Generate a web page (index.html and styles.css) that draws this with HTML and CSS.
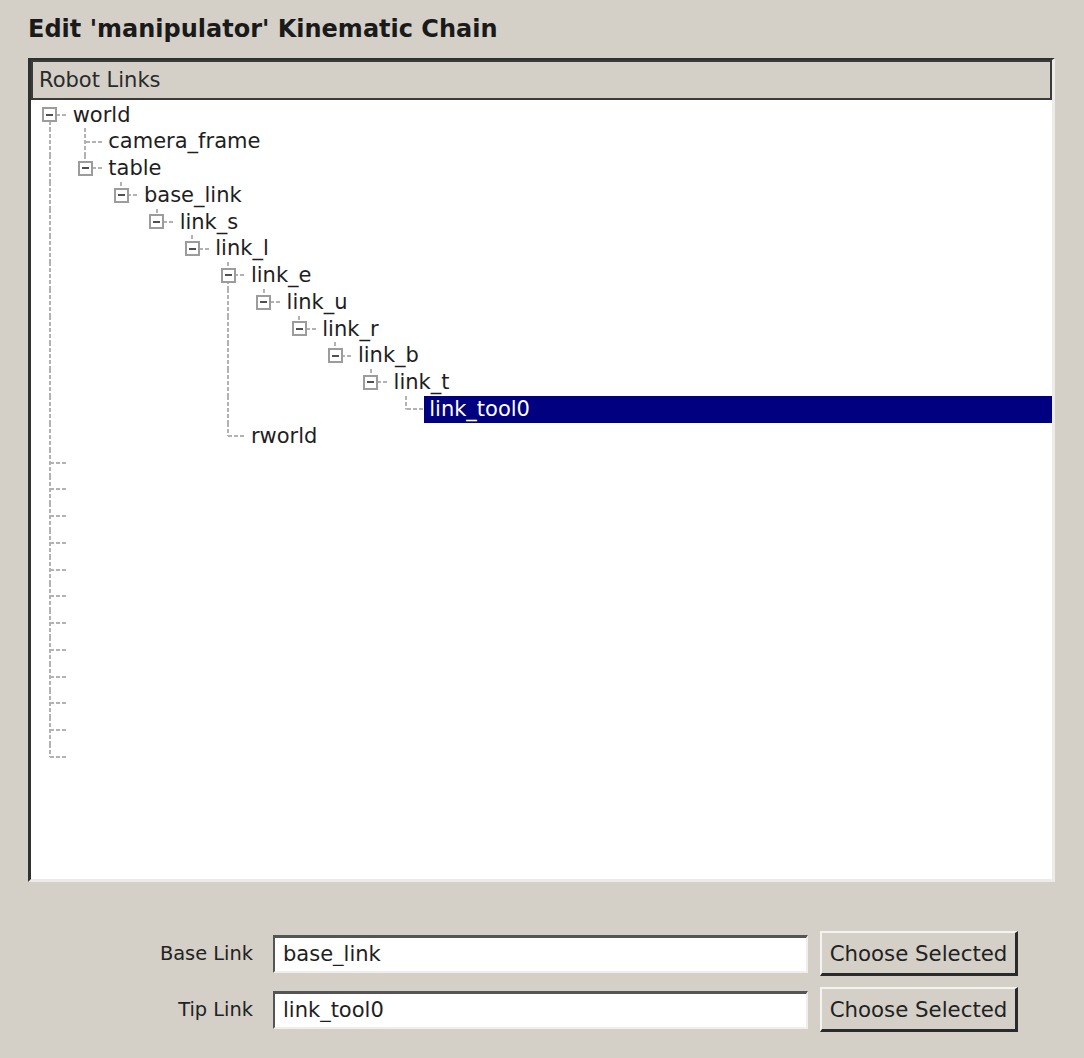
FILE: index.html
```html
<!DOCTYPE html>
<html>
<head>
<meta charset="utf-8">
<link rel="stylesheet" href="styles.css">
</head>
<body>
<h1 class="title">Edit 'manipulator' Kinematic Chain</h1>
<div class="frame">
  <div class="header">Robot Links</div>
  <div class="tree">
    <div class="row"><span class="cell c-bf"><span class="box"></span></span><span class="label">world</span></div>
    <div class="row"><span class="cell c-p"></span><span class="cell c-t"></span><span class="label">camera_frame</span></div>
    <div class="row"><span class="cell c-p"></span><span class="cell c-bl"><span class="box"></span></span><span class="label">table</span></div>
    <div class="row"><span class="cell c-p"></span><span class="cell"></span><span class="cell c-bl"><span class="box"></span></span><span class="label">base_link</span></div>
    <div class="row"><span class="cell c-p"></span><span class="cell"></span><span class="cell"></span><span class="cell c-bl"><span class="box"></span></span><span class="label">link_s</span></div>
    <div class="row"><span class="cell c-p"></span><span class="cell"></span><span class="cell"></span><span class="cell"></span><span class="cell c-bl"><span class="box"></span></span><span class="label">link_l</span></div>
    <div class="row"><span class="cell c-p"></span><span class="cell"></span><span class="cell"></span><span class="cell"></span><span class="cell"></span><span class="cell c-bm"><span class="box"></span></span><span class="label">link_e</span></div>
    <div class="row"><span class="cell c-p"></span><span class="cell"></span><span class="cell"></span><span class="cell"></span><span class="cell"></span><span class="cell c-p"></span><span class="cell c-bl"><span class="box"></span></span><span class="label">link_u</span></div>
    <div class="row"><span class="cell c-p"></span><span class="cell"></span><span class="cell"></span><span class="cell"></span><span class="cell"></span><span class="cell c-p"></span><span class="cell"></span><span class="cell c-bl"><span class="box"></span></span><span class="label">link_r</span></div>
    <div class="row"><span class="cell c-p"></span><span class="cell"></span><span class="cell"></span><span class="cell"></span><span class="cell"></span><span class="cell c-p"></span><span class="cell"></span><span class="cell"></span><span class="cell c-bl"><span class="box"></span></span><span class="label">link_b</span></div>
    <div class="row"><span class="cell c-p"></span><span class="cell"></span><span class="cell"></span><span class="cell"></span><span class="cell"></span><span class="cell c-p"></span><span class="cell"></span><span class="cell"></span><span class="cell"></span><span class="cell c-bl"><span class="box"></span></span><span class="label">link_t</span></div>
    <div class="row"><span class="cell c-p"></span><span class="cell"></span><span class="cell"></span><span class="cell"></span><span class="cell"></span><span class="cell c-p"></span><span class="cell"></span><span class="cell"></span><span class="cell"></span><span class="cell"></span><span class="cell c-l"></span><span class="label sel">link_tool0</span></div>
    <div class="row"><span class="cell c-p"></span><span class="cell"></span><span class="cell"></span><span class="cell"></span><span class="cell"></span><span class="cell c-l"></span><span class="label">rworld</span></div>
    <div class="row"><span class="cell c-t"></span></div>
    <div class="row"><span class="cell c-t"></span></div>
    <div class="row"><span class="cell c-t"></span></div>
    <div class="row"><span class="cell c-t"></span></div>
    <div class="row"><span class="cell c-t"></span></div>
    <div class="row"><span class="cell c-t"></span></div>
    <div class="row"><span class="cell c-t"></span></div>
    <div class="row"><span class="cell c-t"></span></div>
    <div class="row"><span class="cell c-t"></span></div>
    <div class="row"><span class="cell c-t"></span></div>
    <div class="row"><span class="cell c-t"></span></div>
    <div class="row"><span class="cell c-l"></span></div>
  </div>
</div>
<div class="form">
  <div class="frow">
    <label class="flabel">Base Link</label>
    <input class="field" type="text" value="base_link">
    <button class="btn">Choose Selected</button>
  </div>
  <div class="frow">
    <label class="flabel">Tip Link</label>
    <input class="field" type="text" value="link_tool0">
    <button class="btn">Choose Selected</button>
  </div>
</div>
</body>
</html>
```
FILE: styles.css
```css
:root {
  --w: 35.67px;
  --h: 26.75px;
  --dot: #b2b2b2;
  --vl: repeating-linear-gradient(to bottom, var(--dot) 0 4px, transparent 4px 6px);
  --hl: repeating-linear-gradient(to right, var(--dot) 0 4px, transparent 4px 6px);
}
html, body {
  margin: 0;
  padding: 0;
  background: #d4d0c8;
  font-family: "DejaVu Sans", "Liberation Sans", sans-serif;
  color: #1e1e1e;
}
.title {
  margin: 0;
  padding: 15px 0 0 28px;
  font-size: 24px;
  line-height: 28px;
  font-weight: bold;
  color: #1a1a1a;
}
.frame {
  margin: 15px 0 0 28px;
  width: 1027px;
  height: 824px;
  box-sizing: border-box;
  border-top: 2px solid #303030;
  border-left: 3px solid #303030;
  border-right: 3px solid #ecebe7;
  border-bottom: 3px solid #ecebe7;
  display: flex;
  flex-direction: column;
}
.header {
  height: 40px;
  box-sizing: border-box;
  border: 2px solid #3a3a3a;
  padding-left: 6px;
  line-height: 36px;
  font-size: 21px;
  color: #2a2a2a;
  background: #d4d0c8;
}
.tree {
  flex: 1;
  background: #fff;
  padding: 1.5px 0 0 1px;
  display: flex;
  flex-direction: column;
}
.row {
  display: flex;
  height: var(--h);
}
.cell {
  flex: 0 0 var(--w);
  height: var(--h);
  display: flex;
  align-items: center;
  justify-content: center;
  background-repeat: no-repeat;
}
.c-p {
  background-image: var(--vl);
  background-size: 2px 100%;
  background-position: 50% 0;
}
.c-t, .c-bm {
  background-image: var(--vl), var(--hl);
  background-size: 2px 100%, 50% 2px;
  background-position: 50% 0, 100% 50%;
}
.c-l, .c-bl {
  background-image: var(--vl), var(--hl);
  background-size: 2px 50%, 50% 2px;
  background-position: 50% 0, 100% 50%;
}
.c-bf {
  background-image: var(--vl), var(--hl);
  background-size: 2px 50%, 50% 2px;
  background-position: 50% 100%, 100% 50%;
}
.box {
  width: 15px;
  height: 15px;
  box-sizing: border-box;
  border: 2px solid #9c9c9c;
  background: #fff linear-gradient(#505050, #505050) center / 7px 2px no-repeat;
}
.label {
  padding: 0 0 0 5px;
  line-height: var(--h);
  font-size: 21px;
  white-space: nowrap;
  color: #1e1e1e;
}
.sel {
  flex: 1;
  background: #000080;
  color: #fff;
}
.form {
  margin-top: 49px;
  padding-left: 28px;
  display: flex;
  flex-direction: column;
  gap: 11px;
}
.frow {
  display: flex;
  align-items: center;
  height: 45px;
}
.flabel {
  width: 225px;
  margin-right: 20px;
  text-align: right;
  font-size: 19.4px;
  color: #222;
}
.field {
  width: 535px;
  height: 38px;
  box-sizing: border-box;
  margin: 0;
  border-top: 3px solid #555;
  border-left: 2px solid #555;
  border-right: 2px solid #efeeea;
  border-bottom: 2px solid #efeeea;
  background: #fff;
  padding: 0 0 0 8px;
  font-family: inherit;
  font-size: 21px;
  color: #1e1e1e;
  outline: none;
}
.btn {
  margin: 0 0 0 12px;
  width: 198px;
  height: 45px;
  box-sizing: border-box;
  padding: 0;
  border-top: 2px solid #f4f3f0;
  border-left: 2px solid #f4f3f0;
  border-right: 3px solid #2a2a2a;
  border-bottom: 3px solid #2a2a2a;
  background: #d4d0c8;
  font-family: inherit;
  font-size: 21.3px;
  color: #222;
}
```
